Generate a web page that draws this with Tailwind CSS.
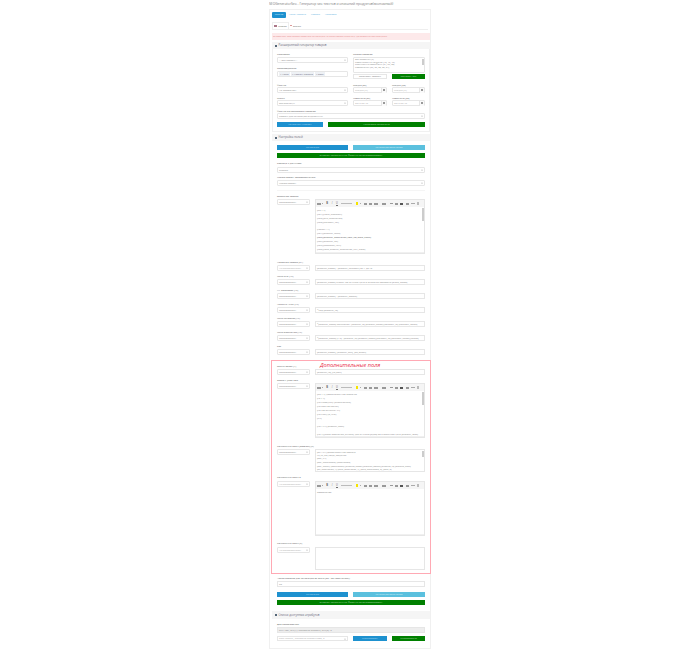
<!DOCTYPE html>
<html lang="ru"><head><meta charset="utf-8"><script src="https://cdn.jsdelivr.net/npm/@tailwindcss/browser@4"></script></head>
<body class="bg-white font-['Open_Sans',sans-serif] text-[#666]">
<div class="ml-[269px] w-[164px] h-[650px] overflow-hidden">
<h1 class="text-[3.3px] leading-[6px] pt-[1px] text-[#777] whitespace-nowrap">SEOGeneratorSeo - Генератор seo текстов и описаний продуктов(экономный)</h1>
<div class="mt-[2px] h-[640px] w-[162px] border border-[#f0f0f0] px-[2px]">
<div class="flex items-center h-[6px] mt-[2px] text-[2.2px] text-[#5aaede] whitespace-nowrap"><span class="bg-[#1e91cf] text-[#d3ecf8] w-[14px] h-[6px] flex items-center justify-center rounded-[1px]">Главная</span><span class="ml-[3px]">Настр. шаблона</span><span class="ml-[5px]">Справка</span><span class="ml-[5px]">Настройки</span></div>
<div class="mt-[5px] h-[7px] border-b border-[#eee] flex items-end text-[2.4px] leading-[6px]"><span class="h-[7px] w-[17px] border border-b-0 border-[#eee] bg-white flex items-center justify-center gap-[1px]"><i class="w-[3px] h-[1.5px] bg-[#a78]"></i>Russian</span><span class="ml-[1px] flex items-center gap-[1px] h-[7px]"><i class="w-[2px] h-[1.5px] bg-[#d99]"></i>English</span></div>
<div class="mt-[3px] h-[7px] w-[158px] bg-[#fde9ea] text-[#e58a8a] text-[2.5px] leading-[7px] pl-[1px] whitespace-nowrap overflow-hidden">Внимание: при использовании генерации не закрывайте страницу до завершения процесса.</div>

<section class="mt-[2px] w-[158px] h-[90px] border border-[#f0f0f0] border-t-0">
<div class="h-[7px] bg-[#f5f5f5] -ml-[1px] w-[158px] flex items-center pl-[3px] gap-[1.5px] text-[2.9px] text-[#667]"><i class="w-[2px] h-[2px] bg-[#567]"></i>Расширенный генератор товаров</div>
<div class="px-[4px] text-[2.5px] leading-[3px]">
<div class="flex gap-[5px]">
<div class="w-[71px]">
<p class="mt-[4px] h-[3px] mb-[1px] text-[#555]">Категория</p>
<div class="h-[6px] border border-[#e6e6e6] rounded-[1px] flex items-center justify-between px-[1px] text-[#888]">---Все товары---<svg class="w-[2px] h-[2px]" viewBox="0 0 4 4"><path d="M0 1l2 2 2-2" fill="none" stroke="#888"/></svg></div>
<p class="mt-[4px] h-[3px] mb-[1px] text-[#555]">Производители</p>
<div class="h-[6px] border border-[#e6e6e6] rounded-[1px] flex items-center gap-[1px] px-[1px] text-[#667]"><span class="bg-[#eef1f5] px-[1px] leading-[4px]">× Apple</span><span class="bg-[#eef1f5] px-[1px] leading-[4px]">× Hewlett-Packard</span><span class="bg-[#eef1f5] px-[1px] leading-[4px]">× Sony</span></div>
</div>
<div class="w-[72px]">
<p class="mt-[4px] h-[3px] mb-[1px] text-[#555]">Список товаров</p>
<div class="h-[16px] border border-[#e6e6e6] rounded-[1px] relative px-[1px] text-[#888] leading-[2.6px] overflow-hidden whitespace-nowrap pt-[1px] text-[2.3px]"><p>Все элементы (7)</p><p>Компьютеры и ноутбуки (18, 45, 46)</p><p>Планшеты и смартфоны (24, 57, 28)</p><p>Компоненты (25, 29, 28, 30, 31)</p><i class="absolute right-0 top-[1px] w-[2px] h-[6px] bg-[#ccc]"></i></div>
<div class="flex gap-[5px] mt-[1px]"><div class="w-[34px] h-[5px] border border-[#e6e6e6] flex items-center justify-center text-[#777]">Загрузить товары</div><div class="w-[33px] h-[5px] bg-[#008000] text-[#a8d4a8] flex items-center justify-center">Показать всё</div></div>
</div>
</div>
<div class="grid grid-cols-[71px_34px_33px] gap-x-[5px] mt-[5px] items-end">
<p class="text-[#555]">Фильтр</p><p class="text-[#555]">Скидка (от)</p><p class="text-[#555]">Скидка (до)</p>
<div class="h-[6px] border border-[#e6e6e6] rounded-[1px] flex items-center justify-between px-[1px] text-[#888]">Не применять<svg class="w-[2px] h-[2px]" viewBox="0 0 4 4"><path d="M0 1l2 2 2-2" fill="none" stroke="#888"/></svg></div>
<div class="h-[6px] border border-[#e6e6e6] rounded-[1px] flex items-center justify-between pl-[1px] text-[#aaa]">Скидка (%)<i class="w-[5px] h-[5px] border-l border-[#e6e6e6] bg-[#fafafa] flex items-center justify-center"><b class="w-[2px] h-[2px] bg-[#999]"></b></i></div>
<div class="h-[6px] border border-[#e6e6e6] rounded-[1px] flex items-center justify-between pl-[1px] text-[#aaa]">Скидка (%)<i class="w-[5px] h-[5px] border-l border-[#e6e6e6] bg-[#fafafa] flex items-center justify-center"><b class="w-[2px] h-[2px] bg-[#999]"></b></i></div>
<p class="text-[#555] mt-[4px]">Статус</p><p class="text-[#555] mt-[4px]">Изменено (от)</p><p class="text-[#555] mt-[4px]">Изменено (до)</p>
<div class="h-[6px] border border-[#e6e6e6] rounded-[1px] flex items-center justify-between px-[1px] text-[#888]">Без разницы<svg class="w-[2px] h-[2px]" viewBox="0 0 4 4"><path d="M0 1l2 2 2-2" fill="none" stroke="#888"/></svg></div>
<div class="h-[6px] border border-[#e6e6e6] rounded-[1px] flex items-center justify-between pl-[1px] text-[#aaa]">2019-02-10<i class="w-[5px] h-[5px] border-l border-[#e6e6e6] bg-[#fafafa] flex items-center justify-center"><b class="w-[2px] h-[2px] bg-[#999]"></b></i></div>
<div class="h-[6px] border border-[#e6e6e6] rounded-[1px] flex items-center justify-between pl-[1px] text-[#aaa]">2019-02-10<i class="w-[5px] h-[5px] border-l border-[#e6e6e6] bg-[#fafafa] flex items-center justify-center"><b class="w-[2px] h-[2px] bg-[#999]"></b></i></div>
</div>
<p class="mt-[4px] text-[#555]">Фильтр по сортировке товаров:</p>
<div class="h-[6px] border border-[#e6e6e6] rounded-[1px] flex items-center justify-between px-[1px] text-[#888]">Товары для генерации выделенных<svg class="w-[2px] h-[2px]" viewBox="0 0 4 4"><path d="M0 1l2 2 2-2" fill="none" stroke="#888"/></svg></div>
<div class="flex gap-[5px] mt-[3px]"><div class="w-[46px] h-[5px] bg-[#1e91cf] text-[#a9d8f0] flex items-center justify-center">Сохранить шаблон</div><div class="w-[97px] h-[5px] bg-[#008000] text-[#a8d4a8] flex items-center justify-center">Настройка сохранена</div></div>
</div>
</section>

<section class="mt-[2px] w-[158px]">
<div class="h-[7px] bg-[#f5f5f5] flex items-center pl-[3px] gap-[1.5px] text-[2.9px] text-[#667]"><i class="w-[2px] h-[2px] bg-[#567]"></i>Настройка полей</div>
<div class="px-[5px] text-[2.5px] leading-[3px]">
<div class="flex gap-[5px] mt-[4px]"><div class="w-[71px] h-[5px] bg-[#1e91cf] text-[#a9d8f0] flex items-center justify-center">Генерация</div><div class="w-[72px] h-[5px] bg-[#5bc0de] text-[#cfeef7] flex items-center justify-center">Генерация мета-тегов</div></div>
<div class="w-[148px] h-[5px] mt-[3px] bg-[#008000] text-[#a8d4a8] flex items-center justify-center">Выбрать сохраненные фразы и синонимизировать</div>
<p class="mt-[4px] mb-[2px] text-[#555]">Таблица с данными:</p>
<div class="w-[148px] h-[6px] border border-[#e6e6e6] rounded-[1px] flex items-center justify-between px-[1px] text-[#888]">Russian<svg class="w-[2px] h-[2px]" viewBox="0 0 4 4"><path d="M0 1l2 2 2-2" fill="none" stroke="#888"/></svg></div>
<p class="mt-[3px] mb-[1px] text-[#555]">Использовать автозаполнение:</p>
<div class="w-[148px] h-[6px] border border-[#e6e6e6] rounded-[1px] flex items-center justify-between px-[1px] text-[#888]">Использовать<svg class="w-[2px] h-[2px]" viewBox="0 0 4 4"><path d="M0 1l2 2 2-2" fill="none" stroke="#888"/></svg></div>
<div class="h-[1px] bg-[#f5f5f5] mt-[4px] w-[148px]"></div>

<p class="mt-[4px] mb-[1px] text-[#555]">Описание товара</p>
<div class="flex gap-[5px]">
<div class="w-[33px] h-[6px] border border-[#e6e6e6] rounded-[1px] flex items-center justify-between px-[1px] text-[#888] shrink-0">Перезаписать<svg class="w-[2px] h-[2px]" viewBox="0 0 4 4"><path d="M0 1l2 2 2-2" fill="none" stroke="#888"/></svg></div>
<div class="w-[110px] h-[55px] border border-[#e6e6e6] relative overflow-hidden">
<div class="h-[7px] bg-[#f5f5f5] flex items-center text-[#666] text-[2.6px] text-center"><i class="ml-[1px] w-[4px] h-[2px] bg-[#999]"></i><i class="ml-[1px] w-[1px] h-[1px] bg-[#aaa]"></i><b class="ml-[3px] w-[2px]">B</b><i class="ml-[3px] w-[2px]">I</i><u class="ml-[3px] w-[2px]">U</u><i class="ml-[3px] w-[11px] h-[1.5px] bg-[#bbb]"></i><i class="ml-[4px] w-[2px] h-[3px] bg-[#f5e500]"></i><i class="ml-[2px] w-[1px] h-[1px] bg-[#aaa]"></i><i class="ml-[3px] w-[3px] h-[2px] bg-[#999]"></i><i class="ml-[2px] w-[3px] h-[2px] bg-[#999]"></i><i class="ml-[2px] w-[4px] h-[2px] bg-[#999]"></i><i class="ml-[4px] w-[4px] h-[2px] bg-[#999]"></i><i class="ml-[4px] w-[3px] h-[1.5px] bg-[#999]"></i><i class="ml-[2px] w-[3px] h-[2px] bg-[#999]"></i><i class="ml-[2px] w-[3px] h-[2px] bg-[#555]"></i><i class="ml-[3px] w-[3px] h-[2px] bg-[#999]"></i><i class="ml-[2px] w-[4px] h-[1px] bg-[#aaa]"></i><i class="ml-[2px] w-[2px] h-[3px] bg-[#bbb]"></i></div>
<div class="px-[1px] pt-[1px] leading-[4px] text-[#888] text-[2.4px] whitespace-nowrap"><p>[h2.1.1]</p><p>[*p1].[table_summary]</p><p>[*p2].[site_description]</p><p>[*p3].[category_list]</p><p class="mt-[3px]">[table2.1.1]</p><p>[*p4].[product_table]</p><p class="text-[#555]">[*p5].[product_description_core_kw_main_block]</p><p>[*p6].[product_list]</p><p>[*p7].[comment_text]</p><p>[*p8].[long_product_description_text_block]</p><p>[*p9].[category_links]</p></div>
<i class="absolute right-0 top-[8px] w-[2px] h-[13px] bg-[#ccc]"></i><i class="absolute left-0 right-0 bottom-0 h-[1px] bg-[#f0f0f0]"></i>
</div>
</div>

<p class="mt-[7px] mb-[1px] text-[#555]">Название товара (h1)</p>
<div class="flex gap-[5px]"><div class="w-[33px] h-[6px] border border-[#e6e6e6] rounded-[1px] flex items-center justify-between px-[1px] text-[#aaa] text-[2.3px] whitespace-nowrap">Не перезаписывать<svg class="w-[2px] h-[2px]" viewBox="0 0 4 4"><path d="M0 1l2 2 2-2" fill="none" stroke="#888"/></svg></div><div class="w-[110px] h-[6px] border border-[#e6e6e6] flex items-center px-[1px] text-[#888] whitespace-nowrap overflow-hidden">[product_name] - [product_category] от 1 до 10</div></div>
<p class="mt-[4px] mb-[1px] text-[#555]">Meta Title (All)</p>
<div class="flex gap-[5px]"><div class="w-[33px] h-[6px] border border-[#e6e6e6] rounded-[1px] flex items-center justify-between px-[1px] text-[#888]">Перезаписать<svg class="w-[2px] h-[2px]" viewBox="0 0 4 4"><path d="M0 1l2 2 2-2" fill="none" stroke="#888"/></svg></div><div class="w-[110px] h-[6px] border border-[#e6e6e6] flex items-center px-[1px] text-[#888] whitespace-nowrap overflow-hidden">[product_name] купить по лучшей цене в интернет-магазине [store_name]</div></div>
<p class="mt-[4px] mb-[1px] text-[#555]">H1 заголовок (All)</p>
<div class="flex gap-[5px]"><div class="w-[33px] h-[6px] border border-[#e6e6e6] rounded-[1px] flex items-center justify-between px-[1px] text-[#888]">Перезаписать<svg class="w-[2px] h-[2px]" viewBox="0 0 4 4"><path d="M0 1l2 2 2-2" fill="none" stroke="#888"/></svg></div><div class="w-[110px] h-[6px] border border-[#e6e6e6] flex items-center px-[1px] text-[#888] whitespace-nowrap overflow-hidden">[product_name] - [product_model]</div></div>
<p class="mt-[4px] mb-[1px] text-[#555]">Артикул / URL (All)</p>
<div class="flex gap-[5px]"><div class="w-[33px] h-[6px] border border-[#e6e6e6] rounded-[1px] flex items-center justify-between px-[1px] text-[#888]">Перезаписать<svg class="w-[2px] h-[2px]" viewBox="0 0 4 4"><path d="M0 1l2 2 2-2" fill="none" stroke="#888"/></svg></div><div class="w-[110px] h-[6px] border border-[#e6e6e6] flex items-center px-[1px] text-[#888] whitespace-nowrap overflow-hidden">^Код-[product_id]</div></div>
<p class="mt-[4px] mb-[1px] text-[#555]">Meta Keywords (All)</p>
<div class="flex gap-[5px]"><div class="w-[33px] h-[6px] border border-[#e6e6e6] rounded-[1px] flex items-center justify-between px-[1px] text-[#888]">Перезаписать<svg class="w-[2px] h-[2px]" viewBox="0 0 4 4"><path d="M0 1l2 2 2-2" fill="none" stroke="#888"/></svg></div><div class="w-[110px] h-[6px] border border-[#e6e6e6] flex items-center px-[1px] text-[#888] whitespace-nowrap overflow-hidden text-[2.4px]">^[product_name] notification - [product_id] [product_name] [category_id] [category_name]</div></div>
<p class="mt-[4px] mb-[1px] text-[#555]">Meta Description (All)</p>
<div class="flex gap-[5px]"><div class="w-[33px] h-[6px] border border-[#e6e6e6] rounded-[1px] flex items-center justify-between px-[1px] text-[#888]">Перезаписать<svg class="w-[2px] h-[2px]" viewBox="0 0 4 4"><path d="M0 1l2 2 2-2" fill="none" stroke="#888"/></svg></div><div class="w-[110px] h-[6px] border border-[#e6e6e6] flex items-center px-[1px] text-[#888] whitespace-nowrap overflow-hidden text-[2.4px]">^[product_name] [1-5] - [product_id] [product_name] [category_id] [category_name] [brand]</div></div>
<p class="mt-[4px] mb-[1px] text-[#555]">Tag</p>
<div class="flex gap-[5px]"><div class="w-[33px] h-[6px] border border-[#e6e6e6] rounded-[1px] flex items-center justify-between px-[1px] text-[#888]">Перезаписать<svg class="w-[2px] h-[2px]" viewBox="0 0 4 4"><path d="M0 1l2 2 2-2" fill="none" stroke="#888"/></svg></div><div class="w-[110px] h-[6px] border border-[#e6e6e6] flex items-center px-[1px] text-[#888] whitespace-nowrap overflow-hidden">[product_name], [product_sku], [sn_order]</div></div>

<div class="relative -ml-[6px] mt-[5px] w-[160px] h-[214px] border border-[#ffa9b4] pl-[5px]">
<p class="absolute left-[48px] top-[1px] text-[5.6px] leading-[7px] italic text-[#e8304a] whitespace-nowrap">Дополнительные поля</p>
<p class="mt-[4px] mb-[1px] text-[#555]">Ярлык меток (1)</p>
<div class="flex gap-[5px]"><div class="w-[33px] h-[6px] border border-[#e6e6e6] rounded-[1px] flex items-center justify-between px-[1px] text-[#888]">Перезаписать<svg class="w-[2px] h-[2px]" viewBox="0 0 4 4"><path d="M0 1l2 2 2-2" fill="none" stroke="#888"/></svg></div><div class="w-[110px] h-[6px] border border-[#e6e6e6] flex items-center px-[1px] text-[#888]">[product_id]_[id_sort]</div></div>
<p class="mt-[4px] mb-[1px] text-[#555]">Блоки у Jivo2 tags</p>
<div class="flex gap-[5px]"><div class="w-[33px] h-[6px] border border-[#e6e6e6] rounded-[1px] flex items-center justify-between px-[1px] text-[#888] shrink-0">Перезаписать<svg class="w-[2px] h-[2px]" viewBox="0 0 4 4"><path d="M0 1l2 2 2-2" fill="none" stroke="#888"/></svg></div>
<div class="w-[110px] h-[55px] border border-[#e6e6e6] relative overflow-hidden">
<div class="h-[7px] bg-[#f5f5f5] flex items-center text-[#666] text-[2.6px] text-center"><i class="ml-[1px] w-[4px] h-[2px] bg-[#999]"></i><i class="ml-[1px] w-[1px] h-[1px] bg-[#aaa]"></i><b class="ml-[3px] w-[2px]">B</b><i class="ml-[3px] w-[2px]">I</i><u class="ml-[3px] w-[2px]">U</u><i class="ml-[3px] w-[11px] h-[1.5px] bg-[#bbb]"></i><i class="ml-[4px] w-[2px] h-[3px] bg-[#f5e500]"></i><i class="ml-[2px] w-[1px] h-[1px] bg-[#aaa]"></i><i class="ml-[3px] w-[3px] h-[2px] bg-[#999]"></i><i class="ml-[2px] w-[3px] h-[2px] bg-[#999]"></i><i class="ml-[2px] w-[4px] h-[2px] bg-[#999]"></i><i class="ml-[4px] w-[4px] h-[2px] bg-[#999]"></i><i class="ml-[4px] w-[3px] h-[1.5px] bg-[#999]"></i><i class="ml-[2px] w-[3px] h-[2px] bg-[#999]"></i><i class="ml-[2px] w-[3px] h-[2px] bg-[#555]"></i><i class="ml-[3px] w-[3px] h-[2px] bg-[#999]"></i><i class="ml-[2px] w-[4px] h-[1px] bg-[#aaa]"></i><i class="ml-[2px] w-[2px] h-[3px] bg-[#bbb]"></i></div>
<div class="px-[1px] pt-[1px] leading-[4px] text-[#888] text-[2.4px] whitespace-nowrap"><p>[h2.1.1] дополнительная табличка</p><p>[td.1.1]</p><p>[tbl.*Продукт]: [brand/details]</p><p>[tbl.cols.tag/kw/list]</p><p>[tbl.tag/attribute: *1]</p><p>[tbl.*list]: [p_title]</p><p>[*\t]</p><p class="mt-[4px]">[tbl.1.*1] [product_desc]</p><p class="mt-[4px]">[tbl.1].[block.description_extend]: для лучшего [ядро] по сниженной цене [product_desc]</p></div>
<i class="absolute right-0 top-[8px] w-[2px] h-[13px] bg-[#ccc]"></i><i class="absolute left-0 right-0 bottom-0 h-[1px] bg-[#f0f0f0]"></i>
</div></div>
<p class="mt-[7px] mb-[1px] text-[#555]">Контактные пары (возраст) (К)</p>
<div class="flex gap-[5px]"><div class="w-[33px] h-[6px] border border-[#e6e6e6] rounded-[1px] flex items-center justify-between px-[1px] text-[#888] shrink-0">Перезаписать<svg class="w-[2px] h-[2px]" viewBox="0 0 4 4"><path d="M0 1l2 2 2-2" fill="none" stroke="#888"/></svg></div>
<div class="w-[110px] h-[23px] border border-[#e6e6e6] relative px-[1px] pt-[1px] overflow-hidden text-[#888] leading-[3px] text-[2.3px]"><p>[tbl.1.*1] дополнительная таблица</p><p>ул_ул_как_тогда_сведения</p><p>[tab:_*1]</p><p class="mt-[1px]">[tab:_description]: [description]</p><p class="mt-[1px] whitespace-nowrap">[tab:_descr]: [description]: [product_name] [product_model] [product_id] [product_desc]</p><p class="whitespace-nowrap">[tbl_description_1]: [field_description_1], [field_description_2], [field_3]</p><i class="absolute right-0 top-[1px] w-[2px] h-[6px] bg-[#ccc]"></i></div></div>
<p class="mt-[4px] mb-[2px] text-[#555]">Контактные пары 3</p>
<div class="flex gap-[5px]"><div class="w-[33px] h-[6px] border border-[#e6e6e6] rounded-[1px] flex items-center justify-between px-[1px] text-[#aaa] shrink-0 text-[2.3px] whitespace-nowrap">Не перезаписывать<svg class="w-[2px] h-[2px]" viewBox="0 0 4 4"><path d="M0 1l2 2 2-2" fill="none" stroke="#888"/></svg></div>
<div class="w-[110px] h-[55px] border border-[#e6e6e6] relative overflow-hidden">
<div class="h-[7px] bg-[#f5f5f5] flex items-center text-[#666] text-[2.6px] text-center"><i class="ml-[1px] w-[4px] h-[2px] bg-[#999]"></i><i class="ml-[1px] w-[1px] h-[1px] bg-[#aaa]"></i><b class="ml-[3px] w-[2px]">B</b><i class="ml-[3px] w-[2px]">I</i><u class="ml-[3px] w-[2px]">U</u><i class="ml-[3px] w-[11px] h-[1.5px] bg-[#bbb]"></i><i class="ml-[4px] w-[2px] h-[3px] bg-[#f5e500]"></i><i class="ml-[2px] w-[1px] h-[1px] bg-[#aaa]"></i><i class="ml-[3px] w-[3px] h-[2px] bg-[#999]"></i><i class="ml-[2px] w-[3px] h-[2px] bg-[#999]"></i><i class="ml-[2px] w-[4px] h-[2px] bg-[#999]"></i><i class="ml-[4px] w-[4px] h-[2px] bg-[#999]"></i><i class="ml-[4px] w-[3px] h-[1.5px] bg-[#999]"></i><i class="ml-[2px] w-[3px] h-[2px] bg-[#999]"></i><i class="ml-[2px] w-[3px] h-[2px] bg-[#555]"></i><i class="ml-[3px] w-[3px] h-[2px] bg-[#999]"></i><i class="ml-[2px] w-[4px] h-[1px] bg-[#aaa]"></i><i class="ml-[2px] w-[2px] h-[3px] bg-[#bbb]"></i></div>
<div class="px-[1px] pt-[1px] leading-[4px] text-[#777] text-[2.4px]"><p>Заполнение</p></div>
<i class="absolute left-0 right-0 bottom-0 h-[1px] bg-[#f0f0f0]"></i>
</div></div>
<p class="mt-[6px] mb-[2px] text-[#555]">Контактные пары (К)</p>
<div class="flex gap-[5px]"><div class="w-[33px] h-[6px] border border-[#e6e6e6] rounded-[1px] flex items-center justify-between px-[1px] text-[#aaa] shrink-0 text-[2.3px] whitespace-nowrap">Не перезаписывать<svg class="w-[2px] h-[2px]" viewBox="0 0 4 4"><path d="M0 1l2 2 2-2" fill="none" stroke="#888"/></svg></div><div class="w-[110px] h-[23px] border border-[#e6e6e6]"></div></div>
</div>

<p class="mt-[3px] mb-[1px] text-[#555]">Число товаров для генерации за сеанс (00 - по умолчанию):</p>
<div class="w-[148px] h-[6px] border border-[#e6e6e6] flex items-center px-[1px] text-[#888]">50</div>
<div class="flex gap-[5px] mt-[5px]"><div class="w-[71px] h-[5px] bg-[#1e91cf] text-[#a9d8f0] flex items-center justify-center">Генерация</div><div class="w-[72px] h-[5px] bg-[#5bc0de] text-[#cfeef7] flex items-center justify-center">Генерация мета-тегов</div></div>
<div class="w-[148px] h-[5px] mt-[3px] bg-[#008000] text-[#a8d4a8] flex items-center justify-center">Выбрать сохраненные фразы и синонимизировать</div>
</div>
</section>

<section class="mt-[6px] w-[158px]">
<div class="h-[8px] bg-[#f5f5f5] flex items-center pl-[3px] gap-[1.5px] text-[2.9px] text-[#667]"><i class="w-[2px] h-[2px] bg-[#567]"></i>Список доступных атрибутов</div>
<div class="px-[5px] text-[2.5px] leading-[3px]">
<p class="mt-[4px] mb-[1px] text-[#555]">Для копирования:</p>
<div class="w-[148px] h-[6px] bg-[#eee] border border-[#e6e6e6] flex items-center px-[1px] text-[#888]">attr: test; attr(1): Тестовый атрибут; attr(2): 3</div>
<div class="flex gap-[5px] mt-[3px]"><div class="w-[71px] h-[5px] border border-[#e6e6e6] flex items-center justify-between px-[1px] text-[#aaa]">Тест характ., Тестовый атрибут 888, 3<svg class="w-[2px] h-[2px]" viewBox="0 0 4 4"><path d="M0 1l2 2 2-2" fill="none" stroke="#888"/></svg></div><div class="w-[34px] h-[5px] bg-[#1e91cf] text-[#a9d8f0] flex items-center justify-center">Скопировать</div><div class="w-[33px] h-[5px] bg-[#008000] text-[#a8d4a8] flex items-center justify-center">Скопировано</div></div>
</div>
</section>
</div>
</div>
</body></html>
